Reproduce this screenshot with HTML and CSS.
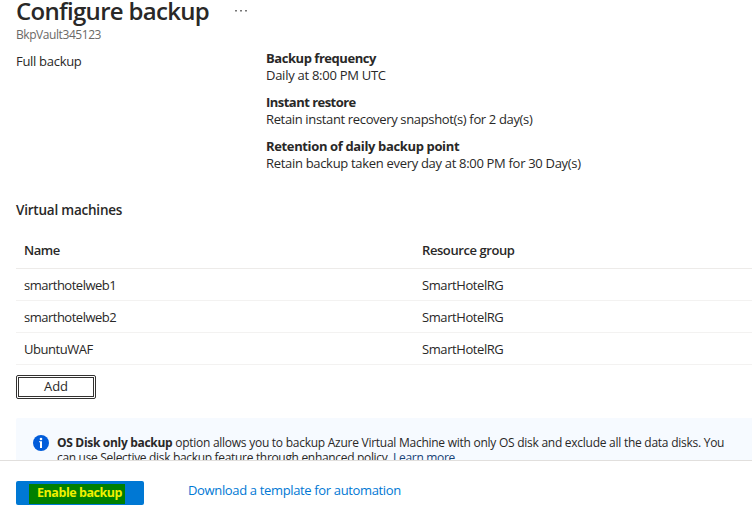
FILE: index.html
```html
<!DOCTYPE html>
<html lang="en">
<head>
<meta charset="utf-8">
<title>Configure backup</title>
<link rel="stylesheet" href="styles.css">
</head>
<body>
<main class="blade">
  <header class="heading">
    <div class="title-row"><h1>Configure backup</h1>
      <svg class="more" width="12" height="4" viewBox="0 0 12 4"><path d="M0 1h2v1.5H0zM5 1h2v1.5H5zM10 1h2v1.5h-2z" fill="#777"/></svg>
    </div>
    <p class="subtitle">BkpVault345123</p>
  </header>
  <section class="policy">
    <div class="policy-name"><span class="full">Full backup</span></div>
    <dl class="details">
      <dt class="t-freq">Backup frequency</dt><dd class="d-freq">Daily at 8:00 PM UTC</dd>
      <dt class="t-inst">Instant restore</dt><dd class="d-inst">Retain instant recovery snapshot(s) for 2 day(s)</dd>
      <dt class="t-ret">Retention of daily backup point</dt><dd class="d-ret">Retain backup taken every day at 8:00 PM for 30 Day(s)</dd>
    </dl>
  </section>
  <section class="machines">
    <h2>Virtual machines</h2>
    <div class="row head"><span class="c-name">Name</span><span class="c-group">Resource group</span></div>
    <div class="row"><span class="vm">smarthotelweb1</span><span class="rg">SmartHotelRG</span></div>
    <div class="row"><span class="vm">smarthotelweb2</span><span class="rg">SmartHotelRG</span></div>
    <div class="row"><span class="vm-u">UbuntuWAF</span><span class="rg">SmartHotelRG</span></div>
    <button class="add">Add</button>
  </section>
  <aside class="note">
    <svg class="info" width="16" height="16" viewBox="0 0 16 16"><circle cx="8" cy="8" r="8" fill="#015cda"/><circle cx="8" cy="4" r="1.3" fill="#fff"/><path d="M6 6.3h3V13H7V7.3H6z" fill="#fff"/></svg>
    <p><span class="line1"><b>OS Disk only backup</b> option allows you to backup Azure Virtual Machine with only OS disk and exclude all the data disks. You</span><br><span class="line2">can use Selective disk backup feature through enhanced policy. <a class="learn">Learn more</a></span></p>
  </aside>
</main>
<footer class="actions">
  <button class="enable"><mark>Enable backup</mark></button>
  <a class="download">Download a template for automation</a>
</footer>
</body>
</html>
```
FILE: styles.css
```css
* { box-sizing: border-box; }
body { margin: 0; width: 752px; height: 510px; overflow: hidden; display: flex; flex-direction: column; background: #fff; color: #292827; font: 13px/17px "Open Sans", "Noto Sans", sans-serif; white-space: nowrap; }
h1, h2, p, dl, dd { margin: 0; }
.blade { height: 460px; flex: none; overflow: hidden; }
.heading { height: 53px; padding-left: 16px; }
.title-row { display: flex; height: 26px; }
h1 { width: 219px; font-size: 24px; line-height: 22px; font-weight: 600; letter-spacing: -0.7px; }
.more { margin-top: 9px; }
.subtitle { color: #6b6966; font-size: 12px; line-height: 18px; letter-spacing: -0.43px; }
.policy { display: flex; height: 148px; padding-left: 16px; }
.policy-name { width: 250px; }
.full { letter-spacing: -0.3px; }
dt { font-weight: 700; margin-top: 10px; }
.details dt:first-child { margin-top: -3px; }
.t-freq { letter-spacing: -0.45px; }
.d-freq { letter-spacing: -0.27px; }
.t-inst { letter-spacing: -0.53px; }
.d-inst { letter-spacing: -0.35px; }
.t-ret { letter-spacing: -0.36px; }
.d-ret { letter-spacing: -0.31px; }
h2 { margin-left: 16px; height: 32px; font-size: 13.5px; line-height: 18px; font-weight: 600; letter-spacing: -0.22px; }
.row { display: grid; grid-template-columns: 398px 1fr; height: 32px; margin-left: 16px; padding-left: 8px; border-bottom: 1px solid #f3f2f1; line-height: 33px; }
.head { height: 36px; font-weight: 600; line-height: 34px; border-color: #edebe9; }
.c-name { letter-spacing: -0.5px; }
.c-group { letter-spacing: -0.42px; }
.vm { letter-spacing: -0.5px; }
.vm-u { letter-spacing: -0.45px; }
.rg { letter-spacing: -0.42px; }
.add { display: block; width: 80px; height: 24px; margin: 10px 0 0 16px; padding: 0 0 2px; border: 1px solid #323130; outline: 1px solid #323130; outline-offset: -3px; border-radius: 2px; background: #fff; color: inherit; font: inherit; line-height: 20px; }
.note { display: flex; height: 80px; margin: 19px 0 0 16px; padding: 17px 0 0 17px; background: #f6faff; font-size: 12px; line-height: 15px; border-radius: 2px 0 0; }
.info { margin-right: 8px; flex: none; }
.line1 { letter-spacing: -0.26px; }
.line1 b { letter-spacing: -0.31px; }
.line2 { letter-spacing: -0.32px; }
.learn { color: #174276; }
.actions { flex: 1; display: flex; border-top: 1px solid #e1dfdd; padding: 20px 0 0 16px; background: #fff; }
.enable { display: flex; width: 128px; height: 24px; border: 0; border-radius: 2px; padding: 3px 0 0 13px; background: #0078d4; text-align: left; font: 700 12.5px/20px "Open Sans", sans-serif; letter-spacing: -0.45px; }
mark { display: block; width: 96px; height: 20px; padding-left: 8px; background: #008000; color: #f0f000; line-height: 17px; }
.download { margin-left: 44px; color: #0078d4; line-height: 19px; letter-spacing: -0.35px; }
```
